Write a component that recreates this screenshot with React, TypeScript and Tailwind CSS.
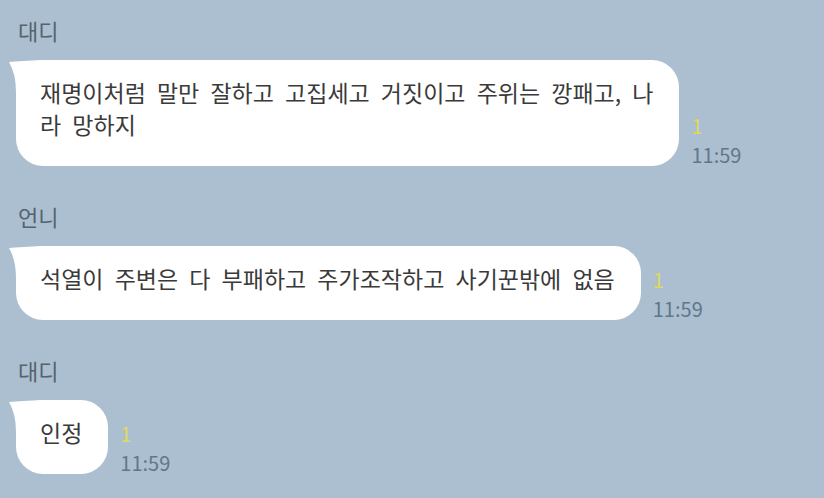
const font = { fontFamily: '"Noto Sans CJK KR", "Noto Sans", sans-serif' }

function Tail() {
  return (
    <svg
      className="absolute left-[-7px] top-0"
      width="34"
      height="32"
      viewBox="0 0 34 32"
    >
      <path d="M0 2 Q 12 1 34 0 L34 32 L7 32 Q 7 14 0 2 Z" fill="#ffffff" />
    </svg>
  )
}

function Message({ name, children, first }: { name: string; children: React.ReactNode; first?: boolean }) {
  return (
    <div className={first ? 'flex flex-col' : 'flex flex-col mt-[36px]'}>
      <div className="pl-[18px] text-[22px] leading-[28px] text-[#56626e]">{name}</div>
      <div className="flex items-end mt-4 pl-4">
        <div className="relative bg-white rounded-[27px] pl-6 pr-[26px] pt-[16px] pb-[26px] text-[23px] leading-[32px] text-[#3a3a3a] [word-spacing:6px] whitespace-nowrap">
          <Tail />
          <div className="relative">{children}</div>
        </div>
        <div className="flex flex-col ml-3 mb-[-1px]">
          <span className="text-[20px] leading-[24px] text-[#e0da5c]">1</span>
          <span className="text-[20px] leading-[24px] text-[#62768a] mt-[5px]">11:59</span>
        </div>
      </div>
    </div>
  )
}

export default function App() {
  return (
    <div className="w-[824px] h-[498px] overflow-hidden bg-[#abbfd1] pt-[16px]" style={font}>
      <Message name="대디" first>
        재명이처럼 말만 잘하고 고집세고 거짓이고 주위는 깡패고, 나
        <br />
        라 망하지
      </Message>
      <Message name="언니">석열이 주변은 다 부패하고 주가조작하고 사기꾼밖에 없음</Message>
      <Message name="대디">인정</Message>
    </div>
  )
}
